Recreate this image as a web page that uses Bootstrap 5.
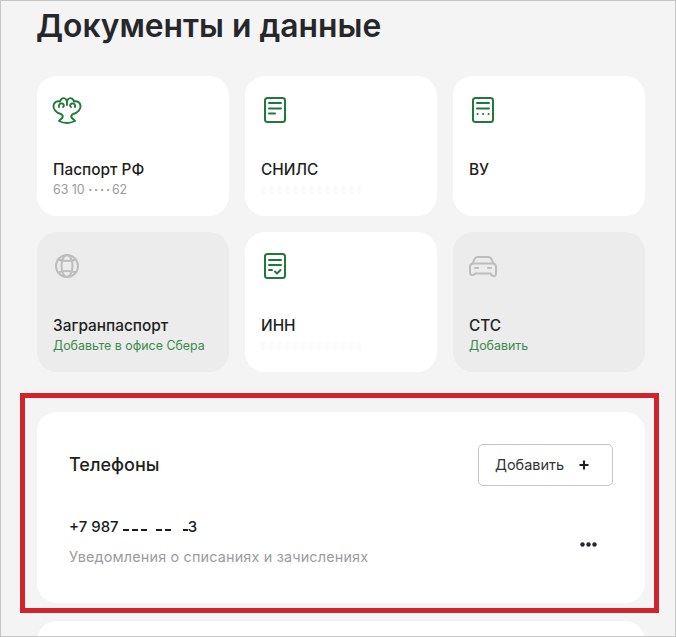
<!DOCTYPE html>
<html lang="ru">
<head>
<meta charset="utf-8">
<title>Документы и данные</title>
<link href="https://cdn.jsdelivr.net/npm/bootstrap@5.3.0/dist/css/bootstrap.min.css" rel="stylesheet">
<style>
html,body{height:637px;overflow:hidden}
body{background:#f4f4f4;font-family:Inter,"Noto Sans",sans-serif;color:#1f1f22;border:1px solid #c6c6c6}
.shell{padding:0 30px 0 36px;height:635px;overflow:hidden}
.page-title{font-size:31.8px;font-weight:600;line-height:36px;margin:7px 0 32px -1px;color:#26272b}
.doc-tile{height:140px;border-radius:20px;background:#fff;padding:0 16px;display:flex;flex-direction:column}
.doc-tile.off{background:#ececec}
.doc-ico{width:32px;height:32px;margin-top:18px;display:block;flex:none}
.emblem{margin-left:-2px;margin-right:2px}
.doc-name{font-size:15.4px;font-weight:500;line-height:20px;margin-top:34px}
.doc-sub{font-size:12.4px;line-height:16px;margin-top:2px;color:#9a9a9a}
.doc-sub.go{color:#3a8a4a}
.pin-dots{font-weight:700;letter-spacing:1.800px}
.doc-ghost{height:9px;width:100px;margin-top:6px;background:repeating-linear-gradient(90deg,#fbfbfb 0 5px,#fff 5px 8px)}
.frame-wrap{position:relative;margin-top:40px}
.frame-line{position:absolute;left:-17px;top:-19px;width:639px;height:220px;border:5px solid #d2232d;pointer-events:none}
.phones{height:191px;border-radius:20px;background:#fff;padding:32px 32px 0}
.phones-h{font-size:18px;font-weight:500;line-height:24px}
.add-btn{width:135px;height:42px;border:1px solid #c6c6c6;border-radius:5px;font-size:14.5px;color:#333;background:#fff;padding:0 22px 0 16px;display:flex;align-items:center;justify-content:space-between}
.phone-line{margin-top:31px}
.phone-no{font-size:15px;font-weight:500;line-height:20px;color:#1c1c1f}
.mask{display:inline-block;height:2px;background:repeating-linear-gradient(90deg,#1c1c1f 0 6px,transparent 6px 9px);vertical-align:1px;margin-right:9px}
.phone-note{font-size:14.4px;line-height:20px;color:#9c9c9c;margin-top:10px;letter-spacing:.17px}
.more-ico{margin-top:4px}
.more-tile{height:60px;margin-top:18px;border-radius:20px;background:#fff}
</style>
</head>
<body>
<div class="shell">
  <h1 class="page-title">Документы и данные</h1>
  <div class="row row-cols-3 g-3">
    <div class="col"><div class="doc-tile">
      <svg class="doc-ico emblem" viewBox="0 0 32 32" fill="none" stroke="#1f7a3a" stroke-width="1.900" stroke-linecap="round" stroke-linejoin="round"><path d="M10 20C5 19 2 15 2.500 11.500 3 8 6 6.500 9 7.500 9.500 5 12 3.500 14 4.500 15 5 15.500 6 16 7 16.500 6 17 5 18 4.500 20 3.500 22.500 5 23 7.500 26 6.500 29 8 29.500 11.500 30 15 27 19 22 20 20.500 21 20 22.500 20.500 23.500L24 27C21 28.500 18.500 29 16 29 13.500 29 11 28.500 8 27L11.500 23.500C12 22.500 11.500 21 10 20Z"/><path d="M8 13C7.500 10.500 9 9 11 9.500 13 10 13.500 12 12 13M24 13C24.500 10.500 23 9 21 9.500 19 10 18.500 12 20 13M16 7v4"/></svg>
      <div class="doc-name">Паспорт РФ</div>
      <div class="doc-sub">63 10 <span class="pin-dots">····</span>62</div>
    </div></div>
    <div class="col"><div class="doc-tile">
      <svg class="doc-ico" viewBox="0 0 32 32" fill="none" stroke="#1f7a3a" stroke-width="2" stroke-linecap="round"><rect x="4" y="4" width="20" height="24" rx="2.500"/><path d="M8 9h12M8 14.500h12M8 19.500h6"/></svg>
      <div class="doc-name">СНИЛС</div>
      <div class="doc-ghost"></div>
    </div></div>
    <div class="col"><div class="doc-tile">
      <svg class="doc-ico" viewBox="0 0 32 32" fill="none" stroke="#1f7a3a" stroke-width="2" stroke-linecap="round"><rect x="4" y="4" width="20" height="24" rx="2.500"/><path d="M8 9h12M8 14.500h12M8.500 20h.1M14 20h.1M19.500 20h.1"/></svg>
      <div class="doc-name">ВУ</div>
    </div></div>
    <div class="col"><div class="doc-tile off">
      <svg class="doc-ico" viewBox="0 0 32 32" fill="none" stroke="#bdbdbd" stroke-width="2"><circle cx="14" cy="16" r="11"/><ellipse cx="14" cy="16" rx="5.500" ry="11"/><path d="M5 9.500c5 2 13 2 18 0M5 22.500c5-2 13-2 18 0"/></svg>
      <div class="doc-name">Загранпаспорт</div>
      <div class="doc-sub go">Добавьте в офисе Сбера</div>
    </div></div>
    <div class="col"><div class="doc-tile">
      <svg class="doc-ico" viewBox="0 0 32 32" fill="none" stroke="#1f7a3a" stroke-width="2" stroke-linecap="round" stroke-linejoin="round"><rect x="4" y="4" width="20" height="24" rx="2.500"/><path d="M8 10h12M8 15h12M8 20h3M14 21.500l2 2 3.500-3.500"/></svg>
      <div class="doc-name">ИНН</div>
      <div class="doc-ghost"></div>
    </div></div>
    <div class="col"><div class="doc-tile off">
      <svg class="doc-ico" viewBox="2 -1 32 32" fill="none" stroke="#bdbdbd" stroke-width="2" stroke-linejoin="round" stroke-linecap="round"><path d="M3 15.500c0-1.500 1.200-2.500 2.500-3l2.300-4.800C8.400 6.500 9.500 6 10.800 6h10.400c1.300 0 2.400.5 3 1.700l2.300 4.800c1.300.5 2.500 1.500 2.500 3v7c0 1.500-1 2.500-2.500 2.500s-2.500-1-2.800-2.500H8.300C8 23 7 24 5.500 24S3 23 3 21.500z"/><path d="M6 12.500h20M8 17h3M21 17h3"/></svg>
      <div class="doc-name">СТС</div>
      <div class="doc-sub go">Добавить</div>
    </div></div>
  </div>
  <div class="frame-wrap">
    <div class="frame-line"></div>
    <section class="phones">
      <div class="d-flex justify-content-between align-items-center">
        <div class="phones-h">Телефоны</div>
        <div class="add-btn"><span>Добавить</span><svg width="12" height="12" viewBox="0 0 12 12" stroke="#1f1f22" stroke-width="2"><path d="M6 1.500v9M1.500 6h9"/></svg></div>
      </div>
      <div class="d-flex justify-content-between align-items-center phone-line">
        <div>
          <div class="phone-no">+7 987 <span class="mask" style="width:24px"></span><span class="mask" style="width:18px"></span><span class="mask" style="width:5px;margin-right:0"></span>3</div>
          <div class="phone-note">Уведомления о списаниях и зачислениях</div>
        </div>
        <svg class="me-3 more-ico" width="17" height="5" viewBox="0 0 17 5" fill="#26272b"><circle cx="2.500" cy="2.500" r="2.200"/><circle cx="8.500" cy="2.500" r="2.200"/><circle cx="14.500" cy="2.500" r="2.200"/></svg>
      </div>
    </section>
  </div>
  <div class="more-tile"></div>
</div>
<script src="https://cdn.jsdelivr.net/npm/bootstrap@5.3.0/dist/js/bootstrap.bundle.min.js"></script>
</body>
</html>
